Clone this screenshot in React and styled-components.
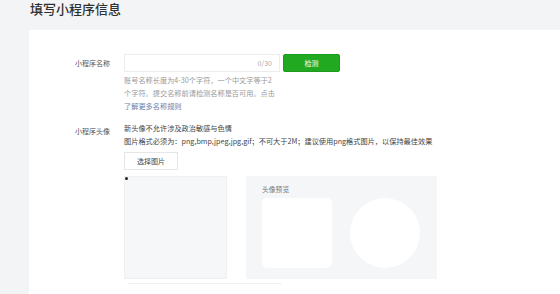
import React from "react";
import styled, { createGlobalStyle } from "styled-components";

const Global = createGlobalStyle`
  html, body { margin: 0; padding: 0; background: #f3f4f6; }
  body { font-family: "Noto Sans CJK SC", "Liberation Sans", sans-serif; color: #353535; overflow: hidden; }
`;

const Page = styled.div`
  width: 560px;
  height: 294px;
  display: flex;
  flex-direction: column;
  padding-left: 29px;
  box-sizing: border-box;
  overflow: hidden;
`;

const Title = styled.h1`
  margin: 0;
  height: 30px;
  flex: none;
  font-size: 13px;
  font-weight: 500;
  line-height: 18px;
  color: #2f2f2f;
  padding-left: 1px;
`;

const Card = styled.div`
  flex: 1;
  background: #ffffff;
  padding: 24px 0 0 46px;
  display: flex;
  flex-direction: column;
  gap: 9px;
`;

const Row = styled.div`
  display: flex;
  align-items: flex-start;
`;

const Label = styled.div`
  width: 49px;
  font-size: 7px;
  color: #555;
  line-height: 18px;
  padding-top: ${p => p.$top || 0}px;
`;

const Field = styled.div`
  display: flex;
  flex-direction: column;
`;

const InputLine = styled.div`
  display: flex;
  align-items: center;
  gap: 3px;
`;

const Input = styled.div`
  width: 156px;
  height: 18px;
  box-sizing: border-box;
  border: 1px solid #ececec;
  display: flex;
  align-items: center;
  justify-content: flex-end;
  padding-right: 7px;
  font-size: 7px;
  color: #aaa;
`;

const GreenButton = styled.button`
  width: 57px;
  height: 18px;
  border: 1px solid #1e9a1e;
  border-radius: 2px;
  background: #22a922;
  color: #fff;
  font-size: 7px;
  font-family: inherit;
  padding: 0;
`;

const Help = styled.p`
  margin: 2px 0 0;
  font-size: 7.2px;
  line-height: 13px;
  color: #9a9a9a;
  white-space: nowrap;
`;

const Link = styled.span`
  color: #6d7ea8;
`;

const Note = styled.div`
  font-size: 7.2px;
  line-height: 13px;
  color: #444;
  white-space: nowrap;
`;

const PlainButton = styled.button`
  margin-top: 4px;
  width: 54px;
  height: 18px;
  border: 1px solid #e6e6e6;
  background: #fff;
  font-size: 7px;
  color: #444;
  font-family: inherit;
  padding: 0;
  align-self: flex-start;
`;

const Boxes = styled.div`
  margin-top: 6px;
  display: flex;
  gap: 19px;
`;

const CropBox = styled.div`
  position: relative;
  width: 103px;
  height: 103px;
  background: #f6f7f9;
  border: 1px solid #eef0f2;
  box-sizing: border-box;
`;

const Dot = styled.span`
  position: absolute;
  left: 0;
  top: 0;
  width: 3px;
  height: 3px;
  border-radius: 50%;
  background: #222;
`;

const Preview = styled.div`
  width: 191px;
  height: 103px;
  background: #f5f6f8;
  box-sizing: border-box;
  padding: 8px 16px 0;
  display: flex;
  flex-direction: column;
`;

const PreviewLabel = styled.div`
  font-size: 6.8px;
  color: #777;
  line-height: 10px;
`;

const PreviewRow = styled.div`
  margin-top: 4px;
  display: flex;
  gap: 18px;
  align-items: center;
`;

const Square = styled.div`
  width: 70px;
  height: 70px;
  background: #fff;
  border-radius: 5px;
`;

const Circle = styled.div`
  width: 70px;
  height: 70px;
  background: #fff;
  border-radius: 50%;
`;

const Footer = styled.div`
  margin-top: 4px;
  width: 154px;
  height: 10px;
  border-top: 1px solid #f0f0f0;
  border-bottom: 1px solid #ececec;
  margin-left: 4px;
`;

export default function App() {
  return (
    <>
      <Global />
      <Page>
        <Title>填写小程序信息</Title>
        <Card>
          <Row>
            <Label>小程序名称</Label>
            <Field>
              <InputLine>
                <Input>0/30</Input>
                <GreenButton>检测</GreenButton>
              </InputLine>
              <Help>
                账号名称长度为4-30个字符，一个中文字等于2<br />
                个字符。提交名称前请检测名称是否可用。点击<br />
                <Link>了解更多名称规则</Link>
              </Help>
            </Field>
          </Row>
          <Row>
            <Label $top={0}>小程序头像</Label>
            <Field>
              <Note>新头像不允许涉及政治敏感与色情</Note>
              <Note>图片格式必须为：png,bmp,jpeg,jpg,gif；不可大于2M；建议使用png格式图片，以保持最佳效果</Note>
              <PlainButton>选择图片</PlainButton>
              <Boxes>
                <CropBox><Dot /></CropBox>
                <Preview>
                  <PreviewLabel>头像预览</PreviewLabel>
                  <PreviewRow>
                    <Square />
                    <Circle />
                  </PreviewRow>
                </Preview>
              </Boxes>
              <Footer />
            </Field>
          </Row>
        </Card>
      </Page>
    </>
  );
}
